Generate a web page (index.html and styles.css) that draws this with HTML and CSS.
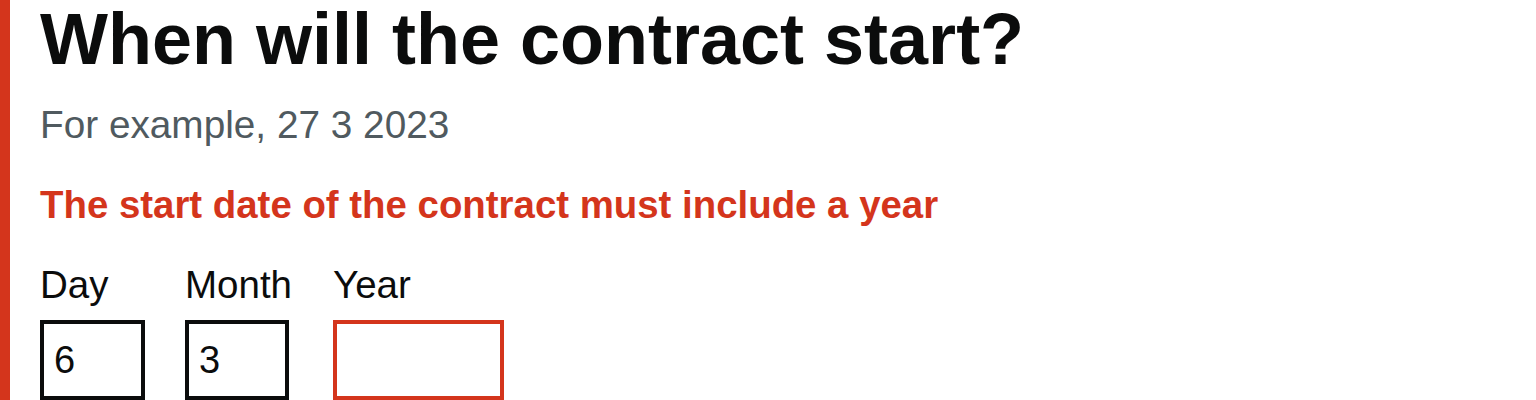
FILE: index.html
```html
<!DOCTYPE html>
<html lang="en">
<head>
<meta charset="utf-8">
<title>When will the contract start?</title>
<link rel="stylesheet" href="styles.css">
</head>
<body>
<div class="form-group form-group--error">
  <fieldset class="fieldset" role="group">
    <legend class="legend">
      <h1 class="heading">When will the contract start?</h1>
    </legend>
    <div class="hint">For example, 27 3 2023</div>
    <p class="error-message">The start date of the contract must include a year</p>
    <div class="date-input">
      <div class="date-item">
        <label class="label" for="day">Day</label>
        <input class="input input--w2" id="day" type="text" inputmode="numeric" value="6">
      </div>
      <div class="date-item date-item--month">
        <label class="label" for="month">Month</label>
        <input class="input input--w2m" id="month" type="text" inputmode="numeric" value="3">
      </div>
      <div class="date-item">
        <label class="label" for="year">Year</label>
        <input class="input input--w4 input--error" id="year" type="text" inputmode="numeric" value="">
      </div>
    </div>
  </fieldset>
</div>
</body>
</html>
```
FILE: styles.css
```css
html, body {
  margin: 0;
  padding: 0;
  background: #ffffff;
}
body {
  font-family: "Liberation Sans", Arial, sans-serif;
  color: #0b0c0c;
  height: 400px;
  overflow: hidden;
}
.form-group--error {
  border-left: 10px solid #d4351c;
  padding-left: 30px;
  min-height: 400px;
  box-sizing: border-box;
}
.fieldset {
  margin: 0;
  padding: 0;
  border: 0;
  min-width: 0;
}
.legend {
  padding: 0;
  display: block;
}
.heading {
  margin: -1px 0 21px;
  font-size: 72px;
  line-height: 80px;
  font-weight: 700;
  color: #0b0c0c;
}
.hint {
  font-size: 38.75px;
  line-height: 50px;
  color: #505a5f;
  margin-bottom: 30px;
}
.error-message {
  margin: 0 0 30px;
  font-size: 38.4px;
  line-height: 50px;
  font-weight: 700;
  color: #d4351c;
}
.date-input {
  display: flex;
  align-items: flex-start;
}
.date-item {
  display: flex;
  flex-direction: column;
  align-items: flex-start;
  margin-right: 40px;
}
.date-item--month {
  margin-right: 41px;
}
.label {
  display: block;
  font-size: 38.5px;
  line-height: 50px;
  margin-bottom: 10px;
  color: #0b0c0c;
}
.input {
  box-sizing: border-box;
  height: 80px;
  margin: 0;
  padding: 10px;
  border: 4px solid #0b0c0c;
  border-radius: 0;
  font-family: "Liberation Sans", Arial, sans-serif;
  font-size: 38px;
  line-height: 50px;
  color: #0b0c0c;
  background: #ffffff;
  outline: none;
  appearance: none;
}
.input--w2 { width: 105px; }
.input--w2m { width: 104px; }
.input--w4 { width: 171px; }
.input--error { border-color: #d4351c; }
```
